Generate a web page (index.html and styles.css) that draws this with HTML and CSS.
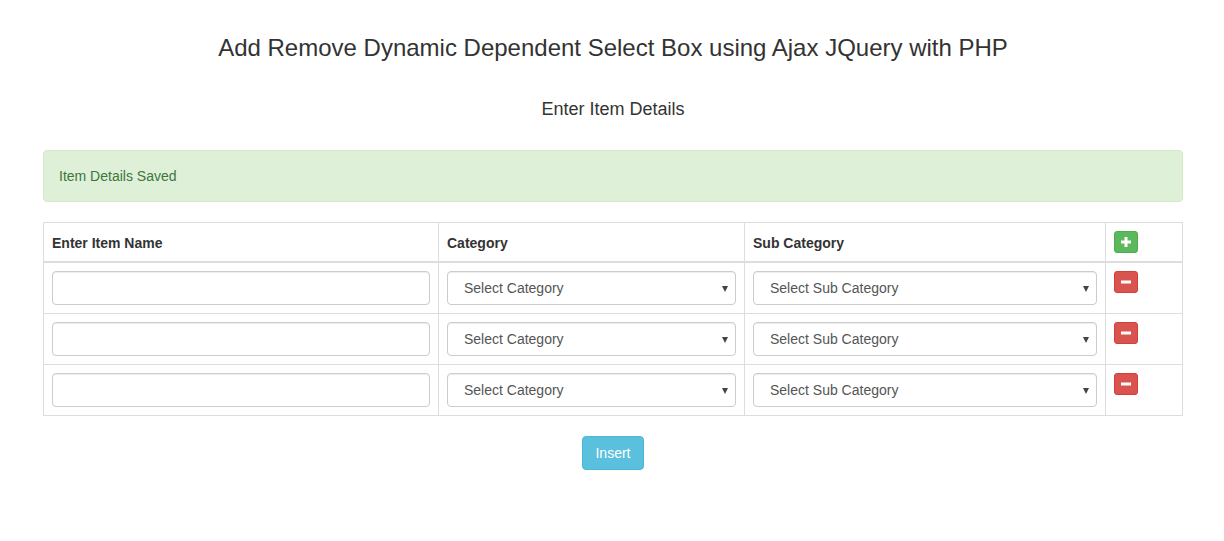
FILE: index.html
```html
<!DOCTYPE html>
<html>
<head>
<meta charset="utf-8">
<title>Add Remove Dynamic Dependent Select Box</title>
<link rel="stylesheet" href="styles.css">
</head>
<body>
<div class="container">
  <h3 class="title">Add Remove Dynamic Dependent Select Box using Ajax JQuery with PHP</h3>
  <h4 class="subtitle">Enter Item Details</h4>
  <form class="item-form">
    <div class="alert-success">Item Details Saved</div>
    <table class="item-table">
      <colgroup>
        <col class="c1"><col class="c2"><col class="c3"><col class="c4">
      </colgroup>
      <thead>
        <tr>
          <th>Enter Item Name</th>
          <th>Category</th>
          <th>Sub Category</th>
          <th><button type="button" class="btn-xs btn-success"><svg width="12" height="12" viewBox="0 0 12 12"><path d="M4.5 1h3v3.5H11v3H7.5V11h-3V7.5H1v-3h3.5z" fill="#fff"/></svg></button></th>
        </tr>
      </thead>
      <tbody>
        <tr>
          <td><input type="text" class="form-control"></td>
          <td><div class="select-wrap"><select class="form-control"><option>Select Category</option></select></div></td>
          <td><div class="select-wrap"><select class="form-control"><option>Select Sub Category</option></select></div></td>
          <td><button type="button" class="btn-xs btn-danger"><svg width="12" height="12" viewBox="0 0 12 12"><rect x="1" y="4.5" width="10" height="3" fill="#fff"/></svg></button></td>
        </tr>
        <tr>
          <td><input type="text" class="form-control"></td>
          <td><div class="select-wrap"><select class="form-control"><option>Select Category</option></select></div></td>
          <td><div class="select-wrap"><select class="form-control"><option>Select Sub Category</option></select></div></td>
          <td><button type="button" class="btn-xs btn-danger"><svg width="12" height="12" viewBox="0 0 12 12"><rect x="1" y="4.5" width="10" height="3" fill="#fff"/></svg></button></td>
        </tr>
        <tr>
          <td><input type="text" class="form-control"></td>
          <td><div class="select-wrap"><select class="form-control"><option>Select Category</option></select></div></td>
          <td><div class="select-wrap"><select class="form-control"><option>Select Sub Category</option></select></div></td>
          <td><button type="button" class="btn-xs btn-danger"><svg width="12" height="12" viewBox="0 0 12 12"><rect x="1" y="4.5" width="10" height="3" fill="#fff"/></svg></button></td>
        </tr>
      </tbody>
    </table>
    <div class="actions">
      <button type="button" class="btn-info">Insert</button>
    </div>
  </form>
</div>
</body>
</html>
```

FILE: styles.css
```css
* { box-sizing: border-box; }
html, body { margin: 0; padding: 0; }
body {
  font-family: "Liberation Sans", Arial, Helvetica, sans-serif;
  font-size: 14px;
  line-height: 1.42857143;
  color: #333;
  background: #fff;
}
.container {
  width: 1170px;
  margin: 0 auto;
  padding: 35px 14px 0 16px;
}
.title {
  margin: 0 0 39px;
  font-size: 24px;
  font-weight: 500;
  line-height: 1.1;
  text-align: center;
}
.subtitle {
  margin: 0 0 30px;
  font-size: 18px;
  font-weight: 500;
  line-height: 1.1;
  text-align: center;
}
.alert-success {
  padding: 15px;
  margin-bottom: 20px;
  border: 1px solid #d6e9c6;
  border-radius: 4px;
  background: #dff0d8;
  color: #3c763d;
}
.item-table {
  width: 100%;
  border-collapse: collapse;
  border-spacing: 0;
  table-layout: fixed;
  margin-bottom: 20px;
  border: 1px solid #ddd;
}
.item-table col.c1 { width: 395px; }
.item-table col.c2 { width: 306px; }
.item-table col.c3 { width: 361px; }
.item-table th,
.item-table td {
  padding: 8px;
  border: 1px solid #ddd;
  vertical-align: top;
  text-align: left;
  line-height: 1.42857143;
}
.item-table thead th {
  border-bottom-width: 2px;
  font-weight: bold;
  vertical-align: bottom;
}
.form-control {
  display: block;
  width: 100%;
  height: 34px;
  padding: 6px 12px;
  font-family: inherit;
  font-size: 14px;
  line-height: 1.42857143;
  color: #555;
  background: #fff;
  border: 1px solid #ccc;
  border-radius: 4px;
  box-shadow: inset 0 1px 1px rgba(0,0,0,.075);
  margin: 0;
}
.select-wrap { position: relative; }
.select-wrap select {
  -webkit-appearance: none;
  appearance: none;
  padding-left: 16px;
  padding-right: 24px;
}
.select-wrap::after {
  content: "";
  position: absolute;
  right: 8px;
  top: 15px;
  width: 0;
  height: 0;
  border-left: 3.5px solid transparent;
  border-right: 3.5px solid transparent;
  border-top: 6px solid #444;
  pointer-events: none;
}
.btn-xs {
  display: inline-flex;
  align-items: center;
  justify-content: center;
  width: 24px;
  height: 22px;
  padding: 1px 5px;
  border: 1px solid transparent;
  border-radius: 3px;
  cursor: pointer;
  vertical-align: top;
}
.btn-xs svg { display: block; }
.btn-success { background: #5cb85c; border-color: #4cae4c; }
.btn-danger { background: #d9534f; border-color: #d43f3a; }
.actions { text-align: center; }
.btn-info {
  display: inline-block;
  height: 34px;
  padding: 6px 12px;
  font-family: inherit;
  font-size: 14px;
  line-height: 1.42857143;
  color: #fff;
  background: #5bc0de;
  border: 1px solid #46b8da;
  border-radius: 4px;
  cursor: pointer;
}
```
